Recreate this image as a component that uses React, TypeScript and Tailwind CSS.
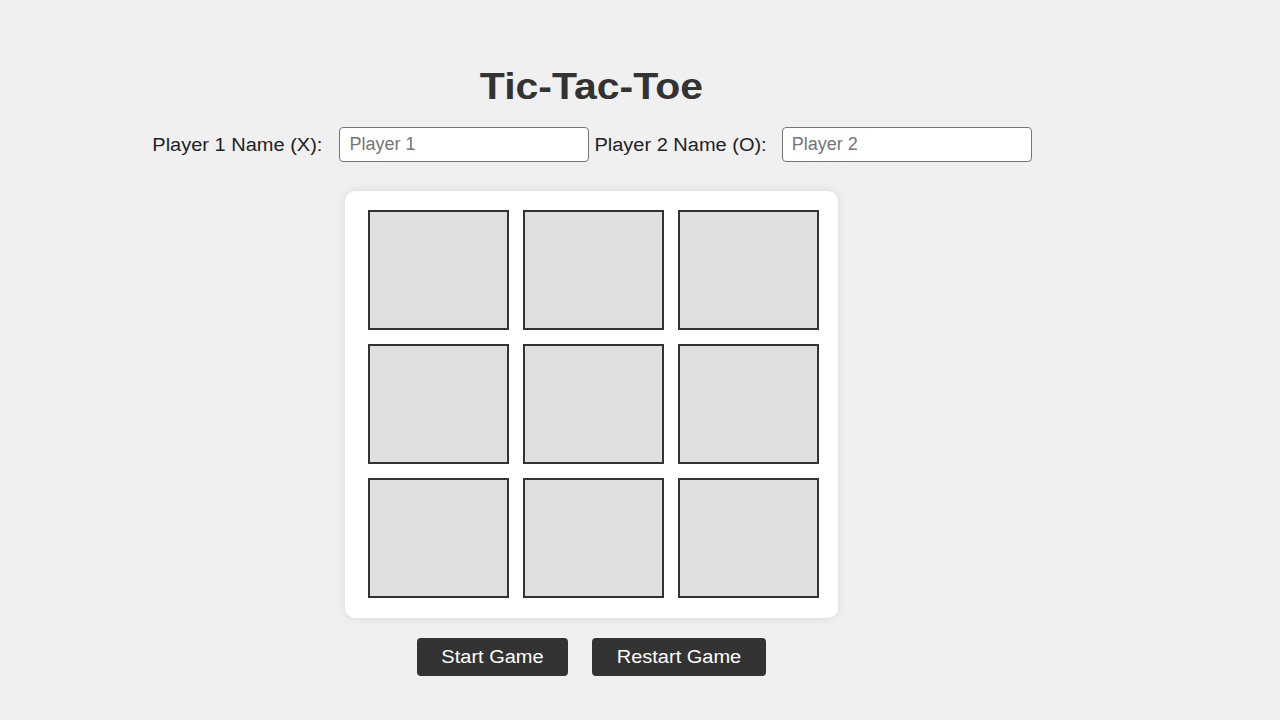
import React from "react";

export default function App() {
  const cells = Array.from({ length: 9 });
  return (
    <div className="min-h-[720px] w-full bg-[#f0f0f0]" style={{ fontFamily: "'Liberation Sans', Arial, sans-serif" }}>
      <div className="w-[1183px] flex flex-col items-center pt-[64px]">
        <h1 className="text-[41px] leading-[46px] font-bold text-[#333] scale-y-[0.88]">Tic-Tac-Toe</h1>
        <div className="flex items-center mt-[17px] text-[20px] text-[#222] pl-[1px]">
          <label className="mr-[17px] scale-y-[0.9]">Player 1 Name (X):</label>
          <input
            placeholder="Player 1"
            className="w-[250px] h-[35px] px-[9px] text-[18px] border border-[#767676] rounded-[4px] bg-white placeholder:text-[#757575] outline-none"
          />
          <label className="ml-[5px] mr-[15px] scale-y-[0.9]">Player 2 Name (O):</label>
          <input
            placeholder="Player 2"
            className="w-[250px] h-[35px] px-[9px] text-[18px] border border-[#767676] rounded-[4px] bg-white placeholder:text-[#757575] outline-none"
          />
        </div>
        <div className="mt-[29px] bg-white rounded-[10px] shadow-[0_0_10px_rgba(0,0,0,0.1)] pt-[19px] pb-[20px] pl-[23px] pr-[19px]">
          <div className="grid grid-cols-[141px_141px_141px] gap-x-[14px] gap-y-[14px]">
            {cells.map((_, i) => (
              <div key={i} className="h-[120px] bg-[#e0e0e0] border-2 border-[#333]" />
            ))}
          </div>
        </div>
        <div className="flex gap-[24px] mt-[20px]">
          <button className="w-[151px] h-[38px] bg-[#333] text-white text-[20px] rounded-[4px]">
            <span className="inline-block scale-y-[0.9]">Start Game</span>
          </button>
          <button className="w-[174px] h-[38px] bg-[#333] text-white text-[20px] rounded-[4px]">
            <span className="inline-block scale-y-[0.9]">Restart Game</span>
          </button>
        </div>
      </div>
    </div>
  );
}
